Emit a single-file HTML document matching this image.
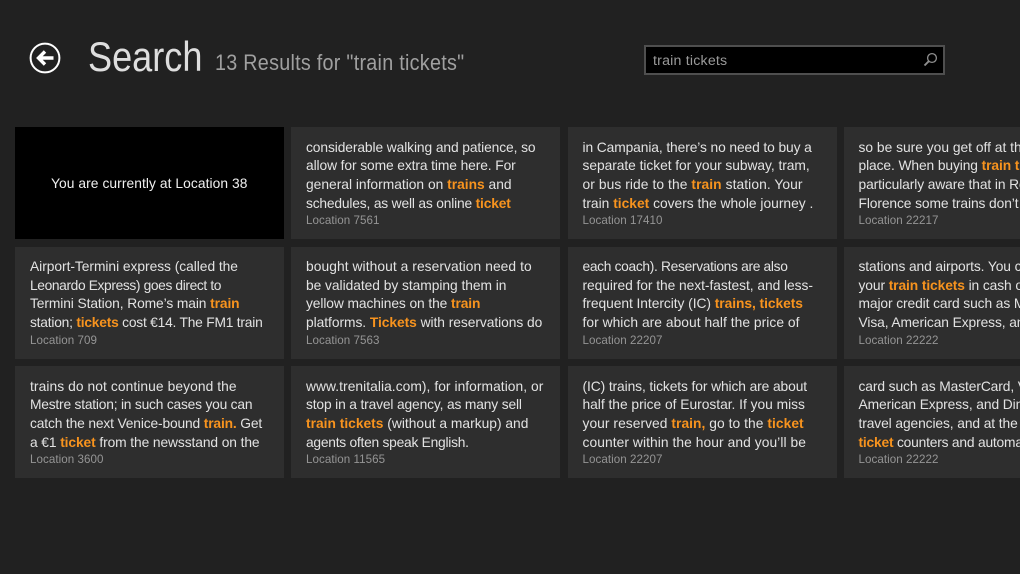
<!DOCTYPE html>
<html><head><meta charset="utf-8"><style>
html,body{margin:0;padding:0;background:#212121;width:1020px;height:574px;overflow:hidden;font-family:"Liberation Sans",sans-serif}
.c{position:absolute;width:269px;height:112px;background:#2e2e2e;overflow:hidden}
.r{width:176.5px}
.l{position:absolute;left:15px;white-space:nowrap;font-size:13.8px;line-height:18px;color:#e2e2e2;letter-spacing:-.1px}
.l1{top:11.6px}.l2{top:30.2px}.l3{top:48.9px}.l4{top:67.6px}
.l5{top:85.4px;font-size:11.6px;color:#959595;letter-spacing:.05px}
b{color:#f7931e}
</style></head><body>
<svg style="position:absolute;left:29px;top:42px" width="32" height="32" viewBox="0 0 32 32"><circle cx="16" cy="16" r="14.4" fill="none" stroke="#fff" stroke-width="2"/><path d="M24.5 16H10M16 9.5L9.5 16L16 22.5" fill="none" stroke="#fff" stroke-width="3.4"/></svg>
<div style="position:absolute;left:88px;top:32px;font-size:42px;line-height:50px;color:#dedede;transform:scaleX(.86);transform-origin:0 0">Search</div>
<div style="position:absolute;left:215px;top:49px;font-size:22px;line-height:28px;color:#a0a0a0;white-space:nowrap;transform:scaleX(.898);transform-origin:0 0;letter-spacing:.3px">13 Results for "train tickets"</div>
<div style="position:absolute;left:644px;top:45px;width:297px;height:26px;border:2px solid #4f4f4f;background:#000"></div>
<div style="position:absolute;left:653px;top:52px;font-size:14.2px;line-height:18px;color:#9a9a9a;letter-spacing:.2px">train tickets</div>
<svg style="position:absolute;left:922px;top:51px" width="17" height="17" viewBox="0 0 17 17"><circle cx="10" cy="7" r="4.4" fill="none" stroke="#8f8f8f" stroke-width="1.3"/><path d="M6.8 10.2L2.5 14.5" stroke="#8f8f8f" stroke-width="1.9"/></svg>

<div class="c" style="left:15px;top:127px;background:#000"><div class="l" style="left:36px;top:48px;color:#f0f0f0;letter-spacing:.07px">You are currently at Location 38</div></div>
<div class="c" style="left:291px;top:127px"><div class="l l1">considerable walking and patience, so</div><div class="l l2">allow for some extra time here. For</div><div class="l l3" style="letter-spacing:0">general information on <b>trains</b> and</div><div class="l l4" style="letter-spacing:-.18px">schedules, as well as online <b>ticket</b></div><div class="l l5">Location 7561</div></div>
<div class="c" style="left:567.5px;top:127px"><div class="l l1">in Campania, there’s no need to buy a</div><div class="l l2" style="letter-spacing:-.05px">separate ticket for your subway, tram,</div><div class="l l3" style="letter-spacing:.08px">or bus ride to the <b>train</b> station. Your</div><div class="l l4" style="letter-spacing:0">train <b>ticket</b> covers the whole journey .</div><div class="l l5">Location 17410</div></div>
<div class="c r" style="left:843.5px;top:127px"><div class="l l1" style="letter-spacing:0">so be sure you get off at the right</div><div class="l l2">place. When buying <b>train tickets</b></div><div class="l l3">particularly aware that in Rome and</div><div class="l l4">Florence some trains don’t stop</div><div class="l l5">Location 22217</div></div>

<div class="c" style="left:15px;top:246.5px"><div class="l l1" style="letter-spacing:-.04px">Airport-Termini express (called the</div><div class="l l2" style="letter-spacing:-.38px">Leonardo Express) goes direct to</div><div class="l l3">Termini Station, Rome’s main <b>train</b></div><div class="l l4" style="letter-spacing:-.22px">station; <b>tickets</b> cost €14. The FM1 train</div><div class="l l5">Location 709</div></div>
<div class="c" style="left:291px;top:246.5px"><div class="l l1" style="letter-spacing:.07px">bought without a reservation need to</div><div class="l l2" style="letter-spacing:-.04px">be validated by stamping them in</div><div class="l l3">yellow machines on the <b>train</b></div><div class="l l4" style="letter-spacing:-.05px">platforms. <b>Tickets</b> with reservations do</div><div class="l l5">Location 7563</div></div>
<div class="c" style="left:567.5px;top:246.5px"><div class="l l1" style="letter-spacing:-.33px">each coach). Reservations are also</div><div class="l l2" style="letter-spacing:-.05px">required for the next-fastest, and less-</div><div class="l l3" style="letter-spacing:-.05px">frequent Intercity (IC) <b>trains, tickets</b></div><div class="l l4" style="letter-spacing:.04px">for which are about half the price of</div><div class="l l5">Location 22207</div></div>
<div class="c r" style="left:843.5px;top:246.5px"><div class="l l1">stations and airports. You can pay</div><div class="l l2">your <b>train tickets</b> in cash or with a</div><div class="l l3">major credit card such as MasterCard,</div><div class="l l4">Visa, American Express, and Diners</div><div class="l l5">Location 22222</div></div>

<div class="c" style="left:15px;top:366px"><div class="l l1" style="letter-spacing:.08px">trains do not continue beyond the</div><div class="l l2" style="letter-spacing:-.21px">Mestre station; in such cases you can</div><div class="l l3" style="letter-spacing:-.15px">catch the next Venice-bound <b>train.</b> Get</div><div class="l l4">a €1 <b>ticket</b> from the newsstand on the</div><div class="l l5">Location 3600</div></div>
<div class="c" style="left:291px;top:366px"><div class="l l1" style="letter-spacing:.05px">www.trenitalia.com), for information, or</div><div class="l l2" style="letter-spacing:-.15px">stop in a travel agency, as many sell</div><div class="l l3" style="letter-spacing:0">
<b>train tickets</b> (without a markup) and</div><div class="l l4" style="letter-spacing:-.25px">agents often speak English.</div><div class="l l5">Location 11565</div></div>
<div class="c" style="left:567.5px;top:366px"><div class="l l1">(IC) trains, tickets for which are about</div><div class="l l2" style="letter-spacing:-.02px">half the price of Eurostar. If you miss</div><div class="l l3" style="letter-spacing:.05px">your reserved <b>train,</b> go to the <b>ticket</b></div><div class="l l4" style="letter-spacing:.07px">counter within the hour and you’ll be</div><div class="l l5">Location 22207</div></div>
<div class="c r" style="left:843.5px;top:366px"><div class="l l1">card such as MasterCard, Visa,</div><div class="l l2">American Express, and Diners</div><div class="l l3">travel agencies, and at the train</div><div class="l l4" style="letter-spacing:-.2px"><b>ticket</b> counters and automatic</div><div class="l l5">Location 22222</div></div>
</body></html>
